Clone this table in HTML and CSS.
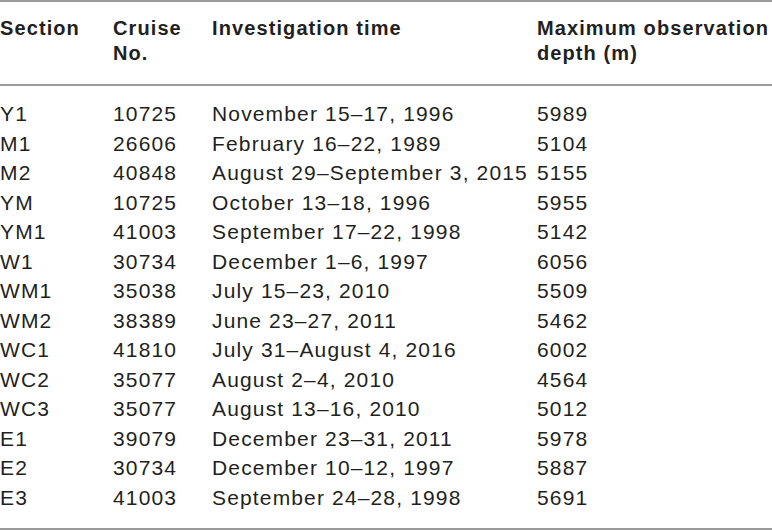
FILE: index.html
```html
<!DOCTYPE html>
<html>
<head>
<meta charset="utf-8">
<link rel="stylesheet" href="styles.css">
</head>
<body>
<table class="data">
  <colgroup>
    <col class="c1"><col class="c2"><col class="c3"><col class="c4">
  </colgroup>
  <thead>
    <tr>
      <th>Section</th>
      <th>Cruise<br>No.</th>
      <th>Investigation time</th>
      <th>Maximum observation<br>depth (m)</th>
    </tr>
  </thead>
  <tbody>
    <tr><td>Y1</td><td>10725</td><td>November 15–17, 1996</td><td>5989</td></tr>
    <tr><td>M1</td><td>26606</td><td>February 16–22, 1989</td><td>5104</td></tr>
    <tr><td>M2</td><td>40848</td><td>August 29–September 3, 2015</td><td>5155</td></tr>
    <tr><td>YM</td><td>10725</td><td>October 13–18, 1996</td><td>5955</td></tr>
    <tr><td>YM1</td><td>41003</td><td>September 17–22, 1998</td><td>5142</td></tr>
    <tr><td>W1</td><td>30734</td><td>December 1–6, 1997</td><td>6056</td></tr>
    <tr><td>WM1</td><td>35038</td><td>July 15–23, 2010</td><td>5509</td></tr>
    <tr><td>WM2</td><td>38389</td><td>June 23–27, 2011</td><td>5462</td></tr>
    <tr><td>WC1</td><td>41810</td><td>July 31–August 4, 2016</td><td>6002</td></tr>
    <tr><td>WC2</td><td>35077</td><td>August 2–4, 2010</td><td>4564</td></tr>
    <tr><td>WC3</td><td>35077</td><td>August 13–16, 2010</td><td>5012</td></tr>
    <tr><td>E1</td><td>39079</td><td>December 23–31, 2011</td><td>5978</td></tr>
    <tr><td>E2</td><td>30734</td><td>December 10–12, 1997</td><td>5887</td></tr>
    <tr><td>E3</td><td>41003</td><td>September 24–28, 1998</td><td>5691</td></tr>
  </tbody>
</table>
</body>
</html>
```

FILE: styles.css
```css
html, body {
  margin: 0;
  padding: 0;
  background: #ffffff;
}

.data {
  width: 772px;
  border-collapse: collapse;
  table-layout: fixed;
  font-family: "Liberation Sans", Arial, sans-serif;
  color: #231f20;
  border-top: 2px solid #9a9a9a;
  border-bottom: 2px solid #9a9a9a;
}

.c1 { width: 113px; }
.c2 { width: 99px; }
.c3 { width: 325px; }
.c4 { width: auto; }

.data th {
  text-align: left;
  vertical-align: top;
  font-weight: bold;
  font-size: 20px;
  line-height: 25px;
  letter-spacing: 1.1px;
  padding: 14px 0 18px 0;
  border-bottom: 2px solid #9a9a9a;
  white-space: nowrap;
}

.data td {
  font-size: 21px;
  line-height: 29.5px;
  letter-spacing: 1.15px;
  padding: 0;
  white-space: nowrap;
}

.data tbody tr:first-child td {
  padding-top: 13px;
}

.data tbody tr:last-child td {
  padding-bottom: 16px;
}
```
